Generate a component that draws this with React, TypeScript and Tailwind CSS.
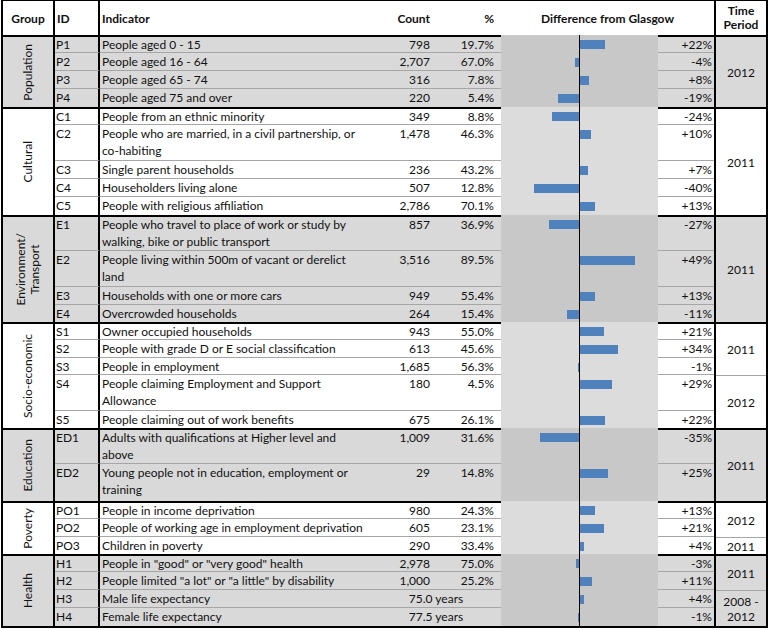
import React from "react";

type Row = {
  id: string;
  lines: string[];
  count: string;
  pct: string;
  diff: number;
  h: string;
  years?: boolean;
};

type Time = { t: string[]; h: string };

type Group = {
  name: string[];
  shade: boolean;
  rows: Row[];
  times: Time[];
};

const groups: Group[] = [
  {
    name: ["Population"],
    shade: true,
    rows: [
      { id: "P1", lines: ["People aged 0 - 15"], count: "798", pct: "19.7%", diff: 22, h: "h-[18px]" },
      { id: "P2", lines: ["People aged 16 - 64"], count: "2,707", pct: "67.0%", diff: -4, h: "h-[18px]" },
      { id: "P3", lines: ["People aged 65 - 74"], count: "316", pct: "7.8%", diff: 8, h: "h-[18px]" },
      { id: "P4", lines: ["People aged 75 and over"], count: "220", pct: "5.4%", diff: -19, h: "h-[18px]" },
    ],
    times: [{ t: ["2012"], h: "h-[72px]" }],
  },
  {
    name: ["Cultural"],
    shade: false,
    rows: [
      { id: "C1", lines: ["People from an ethnic minority"], count: "349", pct: "8.8%", diff: -24, h: "h-[18px]" },
      {
        id: "C2",
        lines: ["People who are married, in a civil partnership, or", "co-habiting"],
        count: "1,478",
        pct: "46.3%",
        diff: 10,
        h: "h-[36px]",
      },
      { id: "C3", lines: ["Single parent households"], count: "236", pct: "43.2%", diff: 7, h: "h-[18px]" },
      { id: "C4", lines: ["Householders living alone"], count: "507", pct: "12.8%", diff: -40, h: "h-[18px]" },
      { id: "C5", lines: ["People with religious affiliation"], count: "2,786", pct: "70.1%", diff: 13, h: "h-[18px]" },
    ],
    times: [{ t: ["2011"], h: "h-[108px]" }],
  },
  {
    name: ["Environment/", "Transport"],
    shade: true,
    rows: [
      {
        id: "E1",
        lines: ["People who travel to place of work or study by", "walking, bike or public transport"],
        count: "857",
        pct: "36.9%",
        diff: -27,
        h: "h-[36px]",
      },
      {
        id: "E2",
        lines: ["People living within 500m of vacant or derelict", "land"],
        count: "3,516",
        pct: "89.5%",
        diff: 49,
        h: "h-[36px]",
      },
      { id: "E3", lines: ["Households with one or more cars"], count: "949", pct: "55.4%", diff: 13, h: "h-[18px]" },
      { id: "E4", lines: ["Overcrowded households"], count: "264", pct: "15.4%", diff: -11, h: "h-[17px]" },
    ],
    times: [{ t: ["2011"], h: "h-[107px]" }],
  },
  {
    name: ["Socio-economic"],
    shade: false,
    rows: [
      { id: "S1", lines: ["Owner occupied households"], count: "943", pct: "55.0%", diff: 21, h: "h-[18px]" },
      { id: "S2", lines: ["People with grade D or E social classification"], count: "613", pct: "45.6%", diff: 34, h: "h-[18px]" },
      { id: "S3", lines: ["People in employment"], count: "1,685", pct: "56.3%", diff: -1, h: "h-[17px]" },
      {
        id: "S4",
        lines: ["People claiming Employment and Support", "Allowance"],
        count: "180",
        pct: "4.5%",
        diff: 29,
        h: "h-[36px]",
      },
      { id: "S5", lines: ["People claiming out of work benefits"], count: "675", pct: "26.1%", diff: 22, h: "h-[17px]" },
    ],
    times: [
      { t: ["2011"], h: "h-[53px]" },
      { t: ["2012"], h: "h-[53px]" },
    ],
  },
  {
    name: ["Education"],
    shade: true,
    rows: [
      {
        id: "ED1",
        lines: ["Adults with qualifications at Higher level and", "above"],
        count: "1,009",
        pct: "31.6%",
        diff: -35,
        h: "h-[36px]",
      },
      {
        id: "ED2",
        lines: ["Young people not in education, employment or", "training"],
        count: "29",
        pct: "14.8%",
        diff: 25,
        h: "h-[37px]",
      },
    ],
    times: [{ t: ["2011"], h: "h-[73px]" }],
  },
  {
    name: ["Poverty"],
    shade: false,
    rows: [
      { id: "PO1", lines: ["People in income deprivation"], count: "980", pct: "24.3%", diff: 13, h: "h-[18px]" },
      {
        id: "PO2",
        lines: ["People of working age in employment deprivation"],
        count: "605",
        pct: "23.1%",
        diff: 21,
        h: "h-[18px]",
      },
      { id: "PO3", lines: ["Children in poverty"], count: "290", pct: "33.4%", diff: 4, h: "h-[17px]" },
    ],
    times: [
      { t: ["2012"], h: "h-[36px]" },
      { t: ["2011"], h: "h-[17px]" },
    ],
  },
  {
    name: ["Health"],
    shade: true,
    rows: [
      { id: "H1", lines: ['People in "good" or "very good" health'], count: "2,978", pct: "75.0%", diff: -3, h: "h-[18px]" },
      {
        id: "H2",
        lines: ['People limited "a lot" or "a little" by disability'],
        count: "1,000",
        pct: "25.2%",
        diff: 11,
        h: "h-[18px]",
      },
      { id: "H3", lines: ["Male life expectancy"], count: "75.0 years", pct: "", diff: 4, h: "h-[18px]", years: true },
      { id: "H4", lines: ["Female life expectancy"], count: "77.5 years", pct: "", diff: -1, h: "h-[18px]", years: true },
    ],
    times: [
      { t: ["2011"], h: "h-[36px]" },
      { t: ["2008 -", "2012"], h: "h-[36px]" },
    ],
  },
];

const SCALE = 1.12;

function Bar({ diff }: { diff: number }) {
  const w = Math.max(1, Math.round(Math.abs(diff) * SCALE));
  return (
    <div className="h-[18px] flex items-center">
      <div className="h-[9px] bg-[#4f81bd]" style={{ width: w }} />
    </div>
  );
}

function DataRow({ row, first, last, shade }: { row: Row; first: boolean; last: boolean; shade: boolean }) {
  const bd = `${first ? "border-t-2 border-t-black" : ""} ${last ? "" : "border-b border-b-[#a6a6a6]"}`;
  const txt = first ? "-mt-px" : "";
  const bg = shade ? "bg-[#d9d9d9]" : "bg-white";
  const band = shade ? "bg-[#c8c8c8]" : "bg-[#dcdcdc]";
  return (
    <div className={`flex ${row.h} ${bg}`}>
      <div className={`w-[45px] shrink-0 border-r-2 border-r-black pl-[1px] ${bd}`}>
        <div className={txt}>{row.id}</div>
      </div>
      <div className={`w-[265px] shrink-0 pl-[2px] whitespace-nowrap ${bd}`}>
        <div className={txt}>
          {row.lines.map((l, i) => (
            <div key={i}>{l}</div>
          ))}
        </div>
      </div>
      {row.years ? (
        <div className={`w-[136px] shrink-0 text-center pl-[6px] ${bd}`}>
          <div className={txt}>{row.count}</div>
        </div>
      ) : (
        <>
          <div className={`w-[67px] shrink-0 text-right pr-[2px] ${bd}`}>
            <div className={txt}>{row.count}</div>
          </div>
          <div className={`w-[69px] shrink-0 text-right pr-[7px] ${bd}`}>
            <div className={txt}>{row.pct}</div>
          </div>
        </>
      )}
      <div className={`w-[157px] shrink-0 flex ${band}`}>
        <div className="w-[78px] flex justify-end">{row.diff < 0 && <Bar diff={row.diff} />}</div>
        <div className="w-px bg-black" />
        <div className="w-[78px] flex justify-start">{row.diff > 0 && <Bar diff={row.diff} />}</div>
      </div>
      <div className={`w-[56px] shrink-0 text-right pr-[2px] ${bd}`}>
        <div className={txt}>{row.diff > 0 ? `+${row.diff}%` : `${row.diff}%`}</div>
      </div>
    </div>
  );
}

function GroupBlock({ g }: { g: Group }) {
  const bg = g.shade ? "bg-[#d9d9d9]" : "bg-white";
  return (
    <div className="flex">
      <div className={`w-[52px] shrink-0 border-t-2 border-r-2 border-black flex items-center justify-center ${bg}`}>
        <div className="[writing-mode:vertical-rl] rotate-180 text-center leading-[14px] text-[12px]">
          {g.name.map((n, i) => (
            <div key={i}>{n}</div>
          ))}
        </div>
      </div>
      <div className="flex flex-col w-[659px] shrink-0">
        {g.rows.map((r, i) => (
          <DataRow key={r.id} row={r} first={i === 0} last={i === g.rows.length - 1} shade={g.shade} />
        ))}
      </div>
      <div className="w-[52px] shrink-0 border-l-2 border-black flex flex-col">
        {g.times.map((t, i) => (
          <div
            key={i}
            className={`${t.h} ${bg} flex flex-col items-center justify-center leading-[15px] text-[12px] ${
              i === 0 ? "border-t-2 border-t-black" : "border-t border-t-[#a6a6a6]"
            }`}
          >
            {t.t.map((s, j) => (
              <div key={j}>{s}</div>
            ))}
          </div>
        ))}
      </div>
    </div>
  );
}

export default function App() {
  return (
    <div className="w-[768px] h-[630px] bg-white overflow-hidden">
      <div className="ml-px w-[767px] border-t border-l-2 border-r-2 border-b-2 border-black text-[12px] leading-[17px] text-[#111] [font-family:Lato,'Open_Sans',sans-serif]">
        <div className="flex h-[34px] font-bold bg-white">
          <div className="w-[52px] shrink-0 border-r-2 border-black flex items-center justify-center">Group</div>
          <div className="w-[45px] shrink-0 border-r-2 border-black flex items-center pl-[2px]">ID</div>
          <div className="w-[265px] shrink-0 flex items-center pl-[2px]">Indicator</div>
          <div className="w-[67px] shrink-0 flex items-center justify-end pr-[2px]">Count</div>
          <div className="w-[69px] shrink-0 flex items-center justify-end pr-[7px]">%</div>
          <div className="w-[213px] shrink-0 flex items-center justify-center">Difference from Glasgow</div>
          <div className="w-[52px] shrink-0 border-l-2 border-black flex flex-col items-center justify-center leading-[14px]">
            <div>Time</div>
            <div>Period</div>
          </div>
        </div>
        {groups.map((g) => (
          <GroupBlock key={g.name.join("")} g={g} />
        ))}
      </div>
    </div>
  );
}
